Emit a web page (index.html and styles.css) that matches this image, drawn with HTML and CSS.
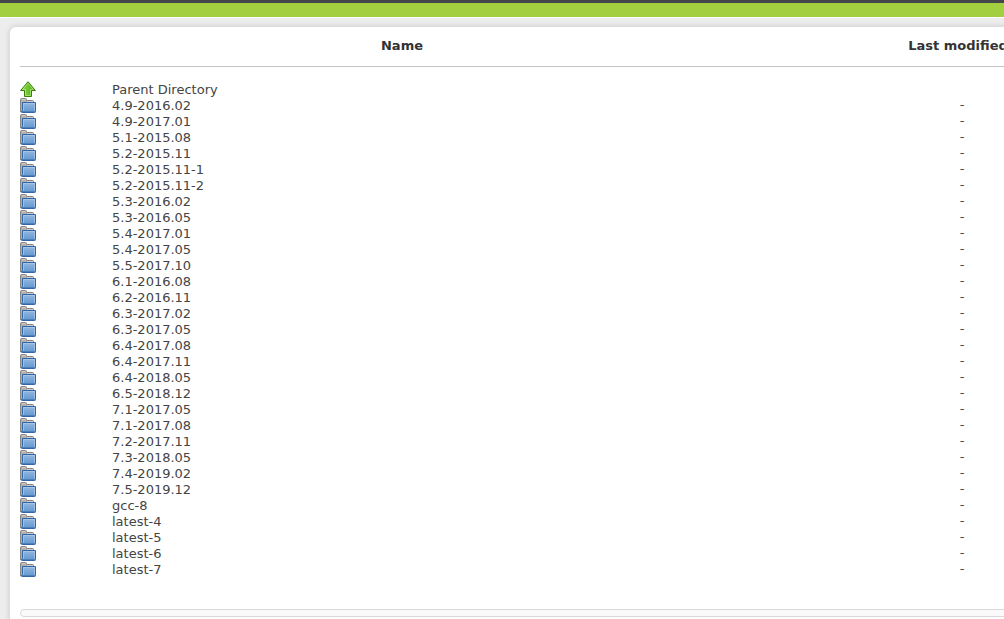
FILE: index.html
```html
<!DOCTYPE html>
<html lang="en">

<head>
  <meta charset="UTF-8" />
  <meta name="viewport" content="width=device-width, initial-scale=1" />
  <title>Index of /components/toolchain/binaries</title>

  <link rel="stylesheet" href="styles.css">
</head>

<body>

  <svg class="sprite" aria-hidden="true">
    <defs>
      <linearGradient id="blue" x1="0" y1="0" x2="0" y2="1">
        <stop offset="0" stop-color="#94b8e0" />
        <stop offset="1" stop-color="#5f97cf" />
      </linearGradient>
      <linearGradient id="green" x1="0" y1="0" x2="1" y2="0">
        <stop offset="0" stop-color="#8ed850" />
        <stop offset="1" stop-color="#4fae12" />
      </linearGradient>
    </defs>
    <symbol id="icon-folder" viewBox="0 0 16 16">
      <path d="M.5 15V2.500q0-1 1-1h4q1 0 1 1v1h6q1 0 1 1V15z" fill="#b0b0b0" stroke="#868686" />
      <path d="M2 2.500h3.500M7 4.500h6" stroke="#cfcfcf" />
      <path d="M2.500 5.500h13v9q0 1-1 1h-12q-1 0-1-1 1 0 1-1z" fill="url(#blue)" stroke="#3465a4" />
      <path d="M3.500 14V6.500h11V14" fill="none" stroke="#b4cfec" stroke-opacity=".6" />
      <path d="M2 14.500h13" stroke="#3f72b0" stroke-opacity=".6" />
    </symbol>
    <symbol id="icon-up" viewBox="0 0 16 16">
      <path d="M8 .7l7.400 8.800h-3.900v6h-7v-6H.6z" fill="url(#green)" stroke="#3a7d0a" stroke-linejoin="round" />
      <path d="M8 2.200L2.700 8.500h2.800v6h5v-6h2.800z" fill="none" stroke="#c1f08f" stroke-opacity=".6" />
    </symbol>
  </svg>

  <header class="topbar"></header>

  <main class="panel">
    <table class="listing">
      <thead>
        <tr>
          <th class="col-icon"></th>
          <th class="col-name">Name</th>
          <th class="col-date">Last modified</th>
        </tr>
      </thead>
      <tbody id="rows">
        <tr>
          <td><svg class="icon"><use href="#icon-up" /></svg></td>
          <td><a href="../">Parent Directory</a></td>
          <td class="col-date"></td>
        </tr>
      </tbody>
    </table>
    <div class="footer-bar"></div>
  </main>

  <script>
    const folders = [
      '4.9-2016.02', '4.9-2017.01',
      '5.1-2015.08', '5.2-2015.11', '5.2-2015.11-1', '5.2-2015.11-2',
      '5.3-2016.02', '5.3-2016.05', '5.4-2017.01', '5.4-2017.05', '5.5-2017.10',
      '6.1-2016.08', '6.2-2016.11', '6.3-2017.02', '6.3-2017.05',
      '6.4-2017.08', '6.4-2017.11', '6.4-2018.05', '6.5-2018.12',
      '7.1-2017.05', '7.1-2017.08', '7.2-2017.11', '7.3-2018.05', '7.4-2019.02', '7.5-2019.12',
      'gcc-8', 'latest-4', 'latest-5', 'latest-6', 'latest-7'
    ];

    document.getElementById('rows').insertAdjacentHTML('beforeend', folders.map(name => `
      <tr>
        <td><svg class="icon"><use href="#icon-folder" /></svg></td>
        <td><a href="${name}/">${name}</a></td>
        <td class="col-date">-</td>
      </tr>`).join(''));
  </script>

</body>
</html>
```

FILE: styles.css
```css
body {
  margin: 0;
  background: #ededed;
  color: #444;
  font-family: Verdana, "DejaVu Sans", sans-serif;
  font-size: 13px;
  line-height: 16px;
  overflow: hidden auto;
}

.sprite {
  position: absolute;
  width: 0;
  height: 0;
}

.topbar {
  height: 14px;
  background: #a2cf40;
  border-top: 3px solid #444649;
  border-bottom: 1px solid #fff;
}

.panel {
  min-width: 1212px;
  margin: 9px 10px 0;
  padding: 0 10px 20px;
  background: #fff;
  border-radius: 6px;
  box-shadow: 0 0 6px rgba(0, 0, 0, 0.16);
}

.listing {
  width: 100%;
  table-layout: fixed;
  border-collapse: collapse;
}

.listing th {
  padding: 11px 0 12px;
  color: #333;
  border-bottom: 1px solid #c4c4c4;
}

.listing th.col-date {
  padding-right: 8px;
}

.listing td {
  height: 16px;
  padding: 0;
}

.listing tbody::before {
  content: "";
  display: table-row;
  height: 14px;
}

.col-icon {
  width: 92px;
}

.col-name {
  width: 580px;
}

.col-date {
  text-align: center;
}

.listing a {
  display: block;
  height: 16px;
  line-height: 18px;
  color: #444;
  text-decoration: none;
}

.listing a:hover {
  text-decoration: underline;
}

.icon {
  display: block;
  width: 16px;
  height: 16px;
}

.footer-bar {
  height: 6px;
  margin-top: 32px;
  background: #fafafa;
  border: 1px solid #d9d9d9;
  border-radius: 5px;
}
```
